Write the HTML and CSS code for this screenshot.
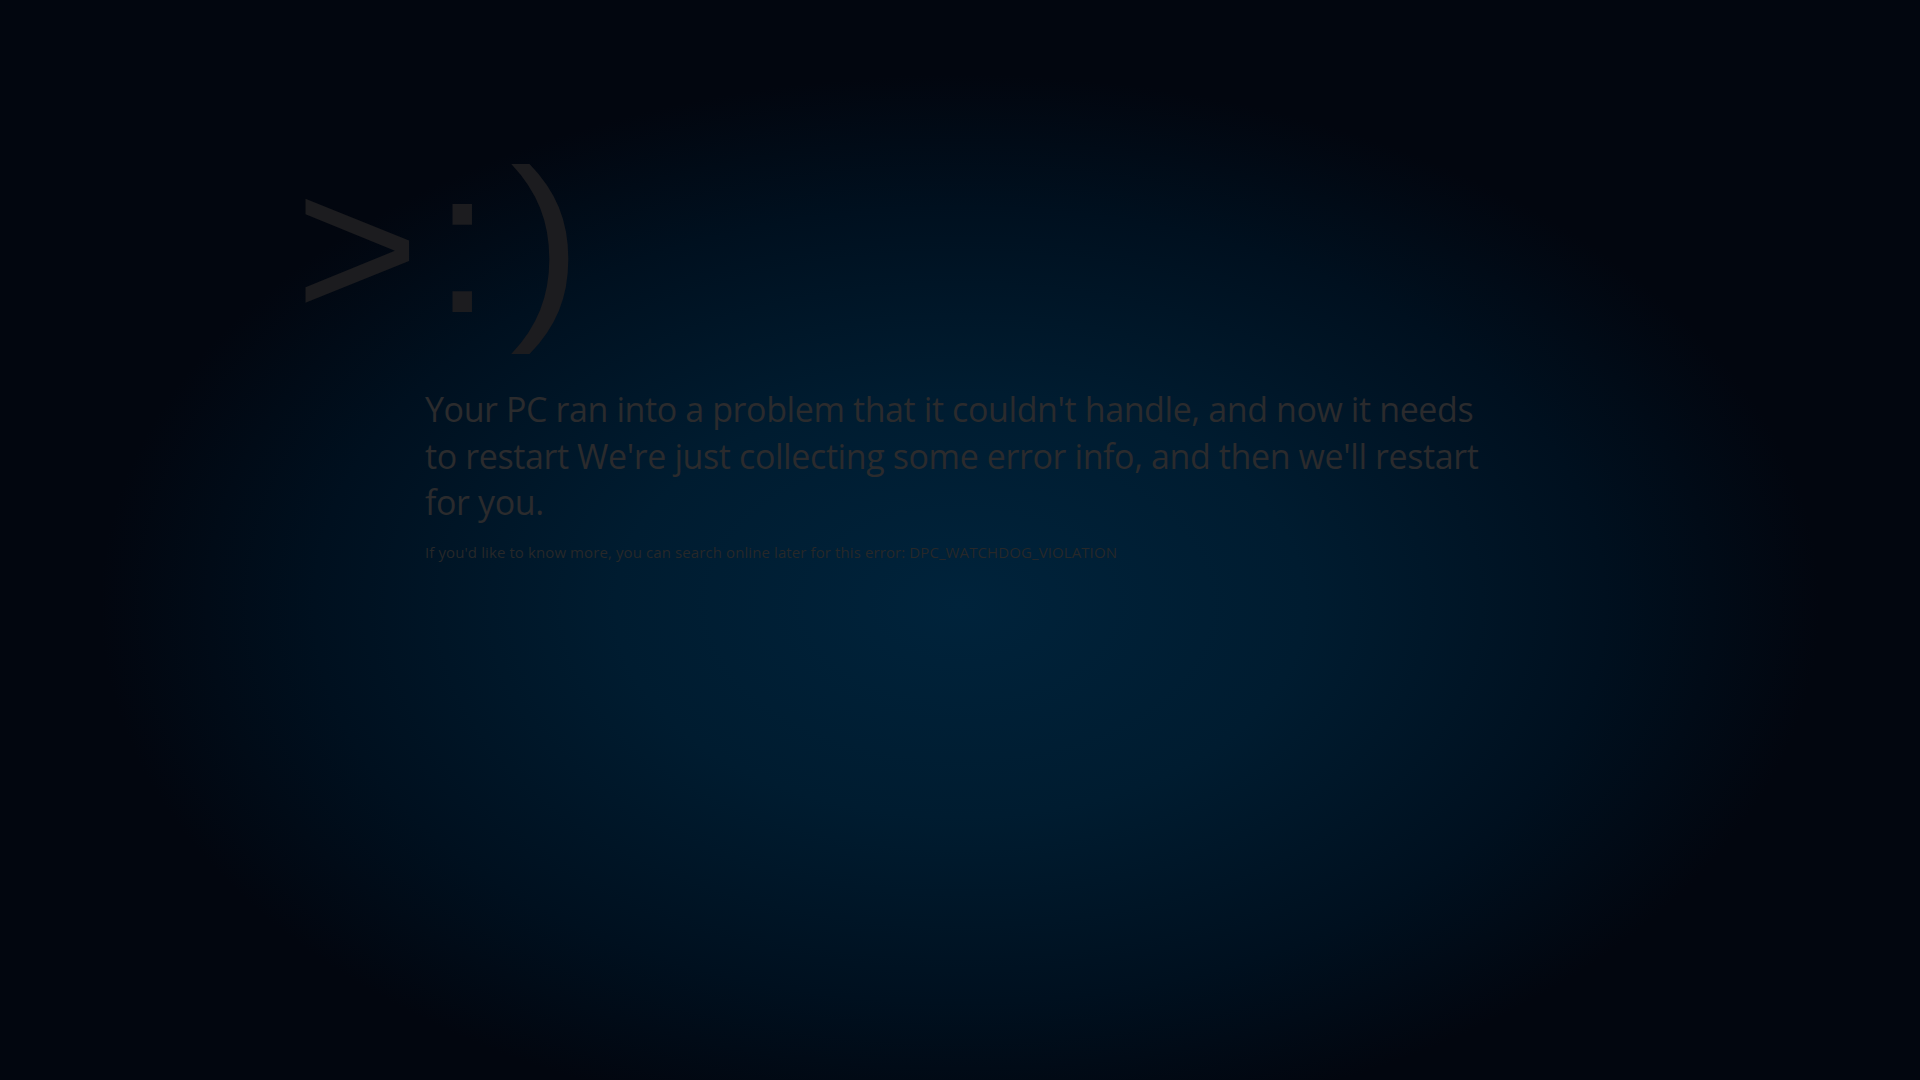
FILE: index.html
```html
<!DOCTYPE html>
<html lang="en">
<head>
<meta charset="utf-8">
<title>Your PC ran into a problem</title>
<link rel="stylesheet" href="styles.css">
</head>
<body>
<main class="screen">
  <div class="face"><span class="gt">&gt;</span><span class="colon">:</span><span class="paren">)</span></div>
  <div class="message">
    <p class="lead">Your PC ran into a problem that it couldn't handle, and now it needs to restart We're just collecting some error info, and then we'll restart for you.</p>
    <p class="detail">If you'd like to know more, you can search online later for this error: DPC_WATCHDOG_VIOLATION</p>
  </div>
</main>
</body>
</html>
```

FILE: styles.css
```css
html, body {
  margin: 0;
  padding: 0;
  width: 100%;
  height: 100%;
}

body {
  background: radial-gradient(ellipse 860px 530px at 50% 56%, #00233b 0%, #001c30 40%, #00101f 75%, #02060f 100%);
  background-color: #02060f;
  font-family: "Open Sans", "Noto Sans", sans-serif;
  overflow: hidden;
}

.screen {
  display: flex;
  flex-direction: column;
  align-items: flex-start;
  padding: 138px 0 0 295px;
  box-sizing: border-box;
  height: 100vh;
}

.face {
  font-family: "Liberation Sans", Arial, sans-serif;
  font-size: 205px;
  line-height: 205px;
  height: 205px;
  color: #1c1c1f;
  display: flex;
  align-items: baseline;
}

.gt {
  display: inline-block;
  transform: translateY(6px) scaleX(1.04);
  transform-origin: left center;
}

.colon {
  margin-left: 19px;
}

.paren {
  margin-left: 19px;
  display: inline-block;
  transform: scaleX(1.05);
  transform-origin: left center;
}

.message {
  margin-left: 130px;
  margin-top: 43px;
  width: 1100px;
}

.lead {
  margin: 0;
  font-size: 34px;
  letter-spacing: -0.4px;
  line-height: 46.5px;
  color: #2b2b2d;
  width: 1080px;
}

.detail {
  margin: 16px 0 0 0;
  font-size: 15px;
  letter-spacing: 0.1px;
  color: #272829;
}
```
